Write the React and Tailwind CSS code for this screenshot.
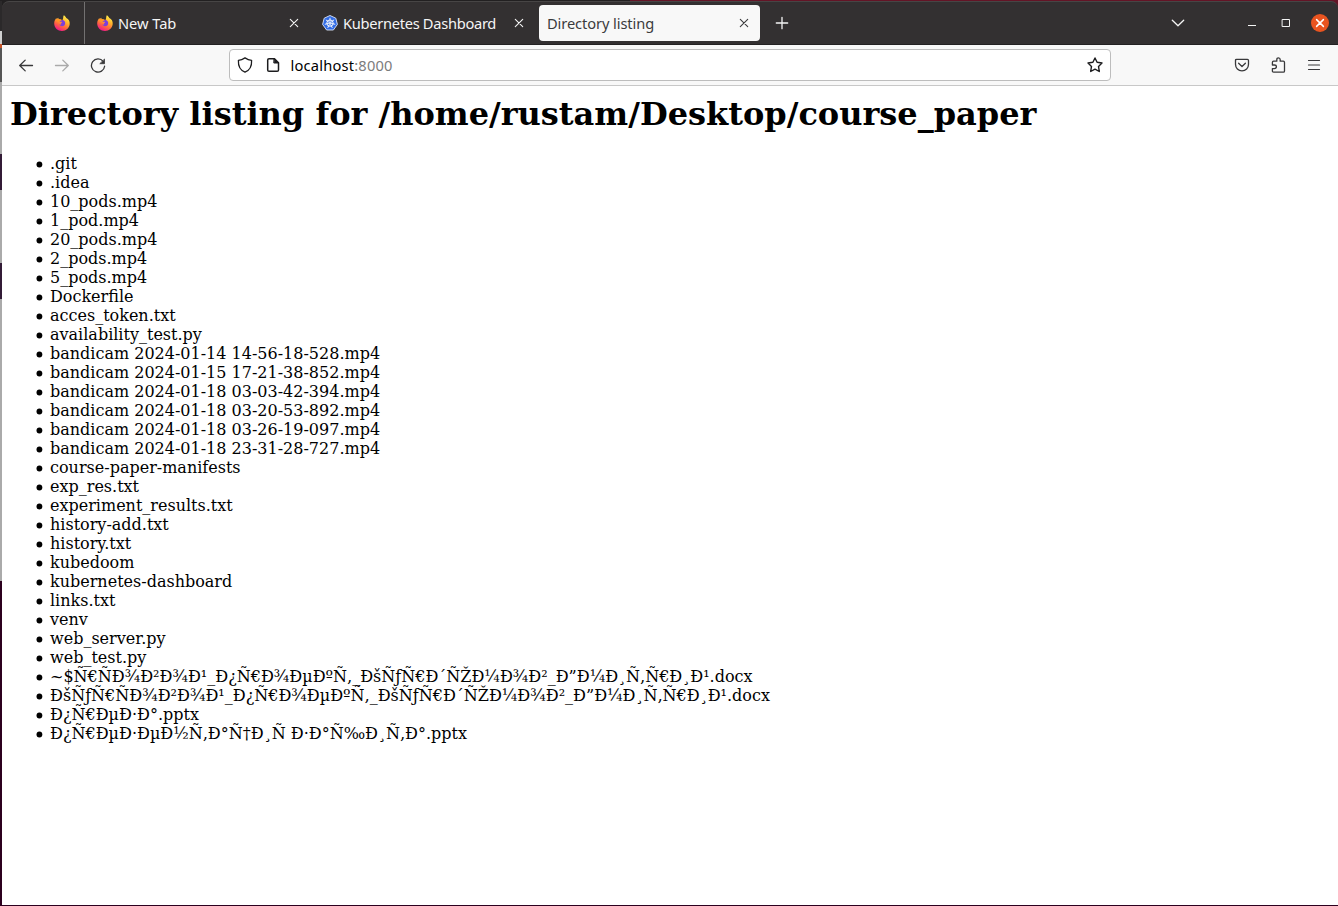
import React from "react";

const files = [
  ".git", ".idea", "10_pods.mp4", "1_pod.mp4", "20_pods.mp4", "2_pods.mp4", "5_pods.mp4",
  "Dockerfile", "acces_token.txt", "availability_test.py",
  "bandicam 2024-01-14 14-56-18-528.mp4",
  "bandicam 2024-01-15 17-21-38-852.mp4",
  "bandicam 2024-01-18 03-03-42-394.mp4",
  "bandicam 2024-01-18 03-20-53-892.mp4",
  "bandicam 2024-01-18 03-26-19-097.mp4",
  "bandicam 2024-01-18 23-31-28-727.mp4",
  "course-paper-manifests", "exp_res.txt", "experiment_results.txt", "history-add.txt",
  "history.txt", "kubedoom", "kubernetes-dashboard", "links.txt", "venv",
  "web_server.py", "web_test.py",
  "~$Ñ€ÑÐ¾Ð²Ð¾Ð¹_Ð¿Ñ€Ð¾ÐµÐºÑ‚_ÐšÑƒÑ€Ð´ÑŽÐ¼Ð¾Ð²_Ð”Ð¼Ð¸Ñ‚Ñ€Ð¸Ð¹.docx",
  "ÐšÑƒÑ€ÑÐ¾Ð²Ð¾Ð¹_Ð¿Ñ€Ð¾ÐµÐºÑ‚_ÐšÑƒÑ€Ð´ÑŽÐ¼Ð¾Ð²_Ð”Ð¼Ð¸Ñ‚Ñ€Ð¸Ð¹.docx",
  "Ð¿Ñ€ÐµÐ·Ð°.pptx",
  "Ð¿Ñ€ÐµÐ·ÐµÐ½Ñ‚Ð°Ñ†Ð¸Ñ Ð·Ð°Ñ‰Ð¸Ñ‚Ð°.pptx",
];

function Firefox({ id }) {
  return (
    <svg className="size-4 shrink-0" viewBox="0 0 16 16">
      <defs>
        <linearGradient id={id} x1="0.8" y1="0.05" x2="0.3" y2="1">
          <stop offset="0" stopColor="#fff44f" />
          <stop offset="0.35" stopColor="#ffb42c" />
          <stop offset="0.65" stopColor="#ff6a3d" />
          <stop offset="1" stopColor="#f0128f" />
        </linearGradient>
      </defs>
      <path d="M9.8 0.2C11 1 11.8 1.8 12.3 3C14.5 4 16 6.3 15.7 9C15.3 13 12.2 15.9 8 15.9C3.7 15.9 0.2 12.8 0.2 8.4C0.2 6.3 1 4.4 2.3 3L2.7 4.1L4.2 2.7L4.8 4.2C6.3 4 7.3 4.4 8.2 5.2C9.6 4 8.8 2 9.8 0.2Z" fill={`url(#${id})`} />
      <path d="M5 7.1C5.4 5.2 8 4.5 9.8 5.5C11.5 6.6 11.7 9 10.3 10.4C8.8 11.8 6.2 11.3 5.3 9.5C6.1 9.8 7 9.6 7.5 9C6.2 8.7 7.5 7.6 8.2 7.2C7.3 6.7 6 6.7 5 7.1Z" fill="#7c3fdb" />
      <path d="M2 4.5C3.4 3.8 5.8 4.1 7.9 5.1C6.6 5.5 5.7 6.3 5 7.3C4 7 3 6 2 4.5Z" fill="#ff9425" />
    </svg>
  );
}

function Kubernetes() {
  return (
    <svg className="size-4 shrink-0" viewBox="0 0 16 16">
      <path d="M8 0.5L13.8 3.2L15.4 9.4L11.4 15H4.6L0.6 9.4L2.2 3.2Z" fill="#326ce5" stroke="#dce6fa" strokeWidth="0.9" strokeLinejoin="round" />
      <g stroke="#fff" strokeWidth="0.9" fill="none">
        <circle cx="8" cy="8.1" r="3.2" />
        <path d="M8 2.8V6.9M12.1 4.8L8.9 7.4M13.2 9.3L9.1 8.3M10.3 12.9L8.5 9.2M5.7 12.9L7.5 9.2M2.8 9.3L6.9 8.3M3.9 4.8L7.1 7.4" />
      </g>
      <circle cx="8" cy="8.1" r="1" fill="#fff" />
    </svg>
  );
}

function Icon({ children, className = "" }) {
  return (
    <svg className={"size-4 shrink-0 " + className} viewBox="0 0 16 16" fill="none" stroke="currentColor" strokeWidth="1.3" strokeLinecap="round" strokeLinejoin="round">
      {children}
    </svg>
  );
}

function Close({ className }) {
  return <Icon className={className}><path d="M4.3 4.3L11.7 11.7M11.7 4.3L4.3 11.7" strokeWidth="1.1" /></Icon>;
}

function TabBar() {
  return (
    <header className="flex h-[44px] shrink-0 items-center rounded-t-[7px] border-t border-b border-t-[#474545] border-b-[#232122] bg-[#333031] text-[14.67px] text-[#f5f5f5]">
      <div className="flex h-full w-[83px] shrink-0 items-center justify-end border-r border-[#737171] pr-[14px]"><Firefox id="pinned" /></div>
      <div className="flex w-[225px] shrink-0 items-center pr-[8px] pl-[12px]">
        <Firefox id="newtab" />
        <span className="ml-[5px] flex-1 tracking-[-0.05px] whitespace-nowrap">New Tab</span>
        <Close />
      </div>
      <div className="flex w-[229px] shrink-0 items-center pr-[12px] pl-[12px]">
        <Kubernetes />
        <span className="ml-[5px] flex-1 tracking-[-0.3px] whitespace-nowrap">Kubernetes Dashboard</span>
        <Close />
      </div>
      <div className="flex h-[36px] w-[221px] shrink-0 items-center rounded bg-[#f8f8f8] px-[8px] text-[#3b3b3d]">
        <span className="flex-1 tracking-[-0.1px] whitespace-nowrap">Directory listing</span>
        <Close />
      </div>
      <Icon className="ml-[14px]"><path d="M8 2.3V13.7M2.3 8H13.7" /></Icon>
      <div className="flex-1" />
      <Icon className="mr-[58px]"><path d="M2.3 5.2L8 10.8L13.7 5.2" /></Icon>
      <Icon className="mr-[18px]"><path d="M4 10.5H12" strokeLinecap="butt" strokeWidth="1" /></Icon>
      <Icon className="mr-[17px]"><path d="M4.5 4.5H11.5V11.5H4.5Z" strokeWidth="1" strokeLinejoin="miter" /></Icon>
      <span className="mr-[9px] flex size-[18px] items-center justify-center rounded-full bg-[#e95420] text-white">
        <Icon><path d="M4.6 4.6L11.4 11.4M11.4 4.6L4.6 11.4" strokeWidth="1.5" /></Icon>
      </span>
    </header>
  );
}

function Toolbar() {
  return (
    <nav className="flex h-[41px] shrink-0 items-center border-b border-[#c8c8c8] bg-[#f8f8f8] pr-[16px] pl-[16px] text-[#38383a]">
      <Icon><path d="M14.5 8.5H1.7M7.2 3.1L1.7 8.5L7.2 13.9" /></Icon>
      <Icon className="ml-[20px] text-[#aaa]"><path d="M1.5 8.5H14.3M8.8 3.1L14.3 8.5L8.8 13.9" /></Icon>
      <Icon className="ml-[20px]">
        <path d="M13.2 4.4A6.6 6.6 0 1 0 14.6 9.2" />
        <path d="M14.5 2.4V6.7H10.2Z" fill="currentColor" strokeWidth="0.8" />
      </Icon>
      <div className="ml-[123px] flex h-[32px] w-[882px] items-center rounded border border-[#bdbdbd] bg-white px-[7px] text-[#1c1c1e]">
        <Icon><path d="M8 0.9C10 2.3 12.2 3.2 14.6 3.4C14.9 9 12.9 13.2 8 15.2C3.1 13.2 1.1 9 1.4 3.4C3.8 3.2 6 2.3 8 0.9Z" /></Icon>
        <Icon className="ml-[12px]">
          <path d="M4 1.7H9.5L13.5 5.7V13Q13.5 14.3 12.2 14.3H4Q2.7 14.3 2.7 13V3Q2.7 1.7 4 1.7Z" strokeWidth="1.5" />
          <path d="M9.2 1.7L13.5 6H9.2Z" fill="currentColor" strokeWidth="1" />
        </Icon>
        <span className="ml-[9.5px] flex-1 text-[14.67px] tracking-[0.2px] text-black">localhost<span className="text-[#7c7c7c]">:8000</span></span>
        <Icon><path d="M8 1L10.1 5.3L15 6L11.5 9.4L12.3 14.5L8 12.1L3.7 14.5L4.5 9.4L1 6L5.9 5.3Z" strokeWidth="1.4" /></Icon>
      </div>
      <div className="flex-1" />
      <Icon><path d="M2.6 2.3H13.4Q14.5 2.3 14.5 3.4V7.3C14.5 11 11.7 13.8 8 13.8C4.3 13.8 1.5 11 1.5 7.3V3.4Q1.5 2.3 2.6 2.3ZM4.6 6.3L8 9.5L11.4 6.3" /></Icon>
      <Icon className="ml-[20px]"><path d="M3.6 4.2H6.8V2.7Q6.8 0.8 8.5 0.8Q10.2 0.8 10.2 2.7V4.2H13.3Q14.5 4.2 14.5 5.4V14Q14.5 15.2 13.3 15.2H3.6Q2.4 15.2 2.4 14V11.6H4.4Q6.4 11.6 6.4 9.8Q6.4 8 4.4 8H2.4V5.4Q2.4 4.2 3.6 4.2Z" /></Icon>
      <Icon className="ml-[20px]"><path d="M2.5 3.5H13.5M2.5 8H13.5M2.5 12.5H13.5" strokeWidth="1.2" /></Icon>
    </nav>
  );
}

function DesktopEdge() {
  return (
    <div className="flex w-[2px] shrink-0 flex-col bg-[#2c001e]">
      <div className="h-[30px] bg-[#2b292a]" />
      <div className="h-[13px] bg-[#d0d0d0]" />
      <div className="h-[4px] bg-[#c65328]" />
      <div className="h-[34px] bg-[#555]" />
      <div className="h-[72px] bg-[#aaa]" />
      <div className="h-[36px] bg-[#321b36]" />
      <div className="h-[73px] bg-[#aaa]" />
      <div className="h-[36px] bg-[#321b36]" />
      <div className="h-[282px] bg-[#aaa]" />
    </div>
  );
}

export default function App() {
  return (
    <div className="flex h-[906px] w-[1338px] flex-col overflow-hidden bg-[#2c001e] font-['Noto_Sans',sans-serif]">
      <div className="flex h-px shrink-0"><div className="w-[630px] bg-[#222021]" /><div className="flex-1 bg-[#641426]" /></div>
      <div className="flex h-[904px]">
        <DesktopEdge />
        <div className="flex min-w-0 flex-1 flex-col bg-[linear-gradient(90deg,#222021_50%,#641426_50%)]">
          <TabBar />
          <Toolbar />
          <main className="flex-1 bg-white px-[8px] pt-[9px] font-['DejaVu_Serif',serif] text-[16px] leading-[19px] text-black">
            <h1 className="mb-[21px] text-[32px] leading-[38px] font-bold whitespace-nowrap">Directory listing for /home/rustam/Desktop/course_paper</h1>
            <ul className="pl-[26px]">
              {files.map((name) => (
                <li key={name} className="flex h-[19px] items-center whitespace-nowrap">
                  <svg className="mt-px mr-[7px] size-[7px] shrink-0" viewBox="0 0 7 7"><circle cx="3.4" cy="3.5" r="2.9" /></svg>
                  {name}
                </li>
              ))}
            </ul>
          </main>
        </div>
      </div>
    </div>
  );
}
